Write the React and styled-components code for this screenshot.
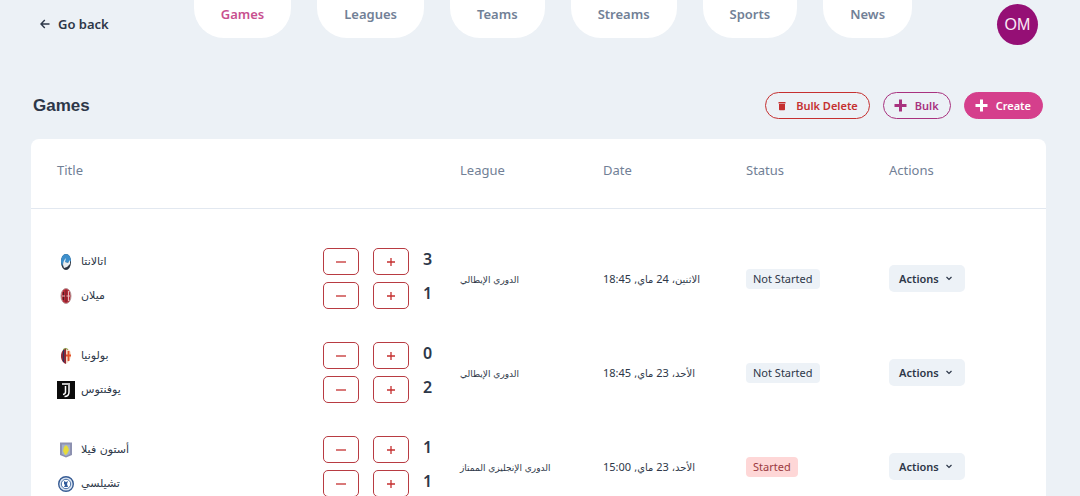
import React, { useState } from 'react';
import styled, { createGlobalStyle } from 'styled-components';

const GlobalStyle = createGlobalStyle`
* {
  box-sizing: border-box;
}
html {
  overflow: hidden;
}
body {
  margin: 0;
  background: #ecf1f6;
  color: #2d3748;
  font-family: "Noto Sans", "DejaVu Sans", sans-serif;
  font-size: 12px;
}
button {
  font-family: inherit;
  cursor: pointer;
}
`;

const Header = styled.header`
display: flex;
align-items: flex-start;
justify-content: space-between;
padding: 0 42px 0 40px;
`;

const BackLink = styled.a`
display: flex;
align-items: center;
gap: 8px;
height: 48px;
color: #2d3748;
font-size: 13px;
font-weight: 600;
text-decoration: none;
`;

const Nav = styled.nav`
display: flex;
gap: 26px;
`;

const NavLink = styled.a`
height: 38px;
padding: 4px 27px 0;
border-radius: 0 0 30px 30px;
background: #fff;
color: ${(props) => (props.$active ? '#c8508f' : '#718096')};
font-size: 13px;
font-weight: 600;
line-height: 20px;
text-decoration: none;
`;

const Avatar = styled.div`
display: flex;
align-items: center;
justify-content: center;
width: 41px;
height: 41px;
margin-top: 4px;
border-radius: 50%;
background: #950f75;
color: #fbe9f5;
font-family: "Liberation Sans", sans-serif;
font-size: 16px;
`;

const TitleBar = styled.div`
display: flex;
align-items: center;
justify-content: space-between;
padding: 44px 37px 20px 33px;
`;

const PageTitle = styled.h1`
margin: 0;
font-family: "Liberation Sans", sans-serif;
font-size: 17px;
font-weight: 700;
line-height: 27px;
`;

const ButtonGroup = styled.div`
display: flex;
gap: 13px;
`;

const colors = {
  danger: '#c53030',
  outline: '#a8327f',
  primary: '#d53f8c',
};

const PillButton = styled.button`
display: flex;
align-items: center;
gap: 8px;
height: 27px;
padding: 0 11px 0 10px;
border: 1px solid ${(props) => colors[props.$kind]};
border-radius: 14px;
background: ${(props) => (props.$kind === 'primary' ? colors.primary : 'transparent')};
color: ${(props) => (props.$kind === 'primary' ? '#fff' : colors[props.$kind])};
font-size: 11px;
font-weight: 600;
`;

const Card = styled.main`
margin: 0 34px 0 31px;
border-radius: 8px;
background: #fff;
`;

const Table = styled.table`
width: 100%;
table-layout: fixed;
border-collapse: collapse;

tbody::before {
  content: "";
  display: block;
  height: 23px;
}
`;

const HeadCell = styled.th`
width: ${(props) => props.$width || 'auto'};
height: 69px;
padding: 0 0 7px 26px;
border-bottom: 1px solid #e2e8f0;
color: #718096;
font-size: 13px;
font-weight: 400;
text-align: left;
`;

const Cell = styled.td`
height: 94px;
padding: 0 0 0 26px;
`;

const TeamLine = styled.div`
display: flex;
align-items: center;
height: 34px;
`;

const Logo = styled.svg`
width: 18px;
height: 18px;
margin-right: 6px;
`;

const TeamName = styled.span`
flex: 1;
font-family: "DejaVu Sans", sans-serif;
font-size: 11px;
`;

const StepButton = styled.button`
display: flex;
align-items: center;
justify-content: center;
width: 36px;
height: 27px;
margin-right: 14px;
padding: 0;
border: 1px solid #b83b42;
border-radius: 5px;
background: #fff;
color: #c53030;
`;

const Score = styled.span`
width: 11px;
padding-bottom: 5px;
font-size: 16px;
font-weight: 600;
line-height: 20px;
`;

const League = styled.span`
display: inline-block;
font-family: "DejaVu Sans", sans-serif;
font-size: 9px;
white-space: nowrap;
`;

const GameDate = styled.time`
display: inline-block;
font-size: 11px;
white-space: nowrap;
`;

const DateWord = styled.span`
font-family: "DejaVu Sans", sans-serif;
font-size: 10px;
`;

const Badge = styled.span`
display: inline-block;
padding: 0 7px;
border-radius: 4px;
background: ${(props) => (props.$started ? '#fed7d7' : '#edf2f7')};
color: ${(props) => (props.$started ? '#9b3a3f' : '#2d3748')};
font-size: 11px;
line-height: 20px;
`;

const ActionsButton = styled.button`
display: flex;
align-items: center;
gap: 6px;
height: 27px;
padding: 0 12px 0 10px;
border: 0;
border-radius: 5px;
background: #edf2f7;
color: #2d3748;
font-size: 11px;
font-weight: 600;
`;

const ArrowIcon = () => (
  <svg width="10" height="10" viewBox="0 0 10 10" fill="none" stroke="currentColor" strokeWidth="1.4">
    <path d="M9.5 5H1M4.8 1 1 5l3.8 4" />
  </svg>
);

const TrashIcon = () => (
  <svg width="12" height="12" viewBox="0 0 12 12" fill="currentColor">
    <path d="M2.5 2h7v1.5h-7zM3 4h6v5.500q0 .8-.8.8H3.800q-.8 0-.8-.8z" />
  </svg>
);

const PlusIcon = () => (
  <svg width="13" height="13" viewBox="0 0 13 13" fill="none" stroke="currentColor" strokeWidth="3">
    <path d="M6.5.5v12M.5 6.5h12" />
  </svg>
);

const StepIcon = ({ plus }) => (
  <svg width="12" height="12" viewBox="0 0 12 12" fill="none" stroke="currentColor" strokeWidth="1.3">
    <path d={plus ? 'M6 2v8M2 6h8' : 'M1 6h10'} />
  </svg>
);

const ChevronIcon = () => (
  <svg width="8" height="8" viewBox="0 0 8 8" fill="none" stroke="currentColor" strokeWidth="1.2">
    <path d="m1.5 2 2.5 2.5L6.5 2" />
  </svg>
);

const logos = {
  atalanta: (
    <>
      <ellipse cx="9" cy="9" rx="5" ry="8" fill="#2c3440" />
      <path d="M4 9C4 4 6 1 9 1s5 3 5 7l-3 2-4-1-2 4z" fill="#3d8fcb" />
      <path d="M6 12c0-3 1-5 3-7l-1 4 3 1 2-3v4l-3 3-3 1z" fill="#e9edf0" />
    </>
  ),
  milan: (
    <>
      <ellipse cx="9" cy="9" rx="5" ry="7.5" fill="#b52a36" stroke="#b89a9c" />
      <path d="M6.5 5v8" stroke="#4a1f28" />
      <path d="M9 3v12" stroke="#6b1f2b" />
      <path d="M9.5 9H13M11.5 4v10M5 9h3" stroke="#e9b9bd" />
    </>
  ),
  bologna: (
    <>
      <path d="M9 1C6 2 4 5 4 9s2 7 5 8z" fill="#8c2738" />
      <path d="M9 1c3 1 5 3 5 7s-2 7-5 9z" fill="#f4d9c5" />
      <path d="M6.5 3v12" stroke="#28385f" />
      <path d="M11.5 4v10M9 8.5h5" stroke="#e4512b" strokeWidth="1.8" />
      <path d="M6 2.5q3-2 5 0" stroke="#83a544" fill="none" />
    </>
  ),
  juventus: (
    <>
      <path d="M0 0h18v18H0z" fill="#0b0b0b" />
      <path d="M5 3h8M8.5 5v6q0 2-2.500 2.500M12 4v7q0 4.500-4.500 4.500" stroke="#fff" strokeWidth="1.5" fill="none" />
    </>
  ),
  villa: (
    <>
      <path d="M3 1.500h12V14l-6 2.500L3 14z" fill="#8d91b0" />
      <path d="M5 3.500h8V13l-4 2-4-2z" fill="#a4b1cb" />
      <path d="m9 4 2 2 1 3-2 4-2 1-2-4 1-4z" fill="#e6db3a" />
    </>
  ),
  chelsea: (
    <>
      <circle cx="9" cy="9" r="7.3" fill="#dbe5f2" stroke="#375c94" strokeWidth="1.4" />
      <circle cx="9" cy="9" r="4.7" fill="#fff" stroke="#4a70a6" />
      <path d="m7 6 2 1 2-1-1 3 1 3H7l1-2-1-1z" fill="#315b9b" />
    </>
  ),
};

const navItems = ['Games', 'Leagues', 'Teams', 'Streams', 'Sports', 'News'];

const games = [
  {
    id: 1,
    teams: [{ logo: 'atalanta', name: 'اتالانتا', score: 3 }, { logo: 'milan', name: 'ميلان', score: 1 }],
    league: 'الدوري الإيطالي',
    date: { weekday: 'الاثنين،', day: 24, month: 'ماي,', time: '18:45' },
    started: false,
  },
  {
    id: 2,
    teams: [{ logo: 'bologna', name: 'بولونيا', score: 0 }, { logo: 'juventus', name: 'يوفنتوس', score: 2 }],
    league: 'الدوري الإيطالي',
    date: { weekday: 'الأحد،', day: 23, month: 'ماي,', time: '18:45' },
    started: false,
  },
  {
    id: 3,
    teams: [{ logo: 'villa', name: 'أستون فيلا', score: 1 }, { logo: 'chelsea', name: 'تشيلسي', score: 1 }],
    league: 'الدوري الإنجليزي الممتاز',
    date: { weekday: 'الأحد،', day: 23, month: 'ماي,', time: '15:00' },
    started: true,
  },
];

const Team = (props) => {
  const { logo, name, score } = props;
  const [value, setValue] = useState(score);
  return (
    <TeamLine>
      <Logo viewBox="0 0 18 18" aria-hidden="true">{logos[logo]}</Logo>
      <TeamName lang="ar">{name}</TeamName>
      <StepButton aria-label={'Decrease ' + name} onClick={() => setValue(Math.max(0, value - 1))}>
        <StepIcon />
      </StepButton>
      <StepButton aria-label={'Increase ' + name} onClick={() => setValue(value + 1)}>
        <StepIcon plus />
      </StepButton>
      <Score>{value}</Score>
    </TeamLine>
  );
};

const GameRow = ({ game }) => {
  const { weekday, day, month, time } = game.date;
  return (
    <tr>
      <Cell>
        {game.teams.map((team) => <Team key={team.logo} {...team} />)}
      </Cell>
      <Cell><League dir="rtl" lang="ar">{game.league}</League></Cell>
      <Cell>
        <GameDate dir="rtl" lang="ar">
          <DateWord>{weekday}</DateWord> {day} <DateWord>{month}</DateWord> {time}
        </GameDate>
      </Cell>
      <Cell><Badge $started={game.started}>{game.started ? 'Started' : 'Not Started'}</Badge></Cell>
      <Cell>
        <ActionsButton>Actions<ChevronIcon /></ActionsButton>
      </Cell>
    </tr>
  );
};

const App = () => {
  const [active, setActive] = useState('Games');

  return (
    <>
      <GlobalStyle />
      <Header>
        <BackLink href="#back"><ArrowIcon />Go back</BackLink>
        <Nav>
          {navItems.map((item) => (
            <NavLink key={item} href={'#' + item.toLowerCase()} $active={item === active} onClick={() => setActive(item)}>
              {item}
            </NavLink>
          ))}
        </Nav>
        <Avatar>OM</Avatar>
      </Header>
      <TitleBar>
        <PageTitle>Games</PageTitle>
        <ButtonGroup>
          <PillButton $kind="danger"><TrashIcon />Bulk Delete</PillButton>
          <PillButton $kind="outline"><PlusIcon />Bulk</PillButton>
          <PillButton $kind="primary"><PlusIcon />Create</PillButton>
        </ButtonGroup>
      </TitleBar>
      <Card>
        <Table>
          <thead>
            <tr>
              <HeadCell>Title</HeadCell>
              <HeadCell $width="143px">League</HeadCell>
              <HeadCell $width="143px">Date</HeadCell>
              <HeadCell $width="143px">Status</HeadCell>
              <HeadCell $width="183px">Actions</HeadCell>
            </tr>
          </thead>
          <tbody>
            {games.map((game) => <GameRow key={game.id} game={game} />)}
          </tbody>
        </Table>
      </Card>
    </>
  );
};

export default App;
